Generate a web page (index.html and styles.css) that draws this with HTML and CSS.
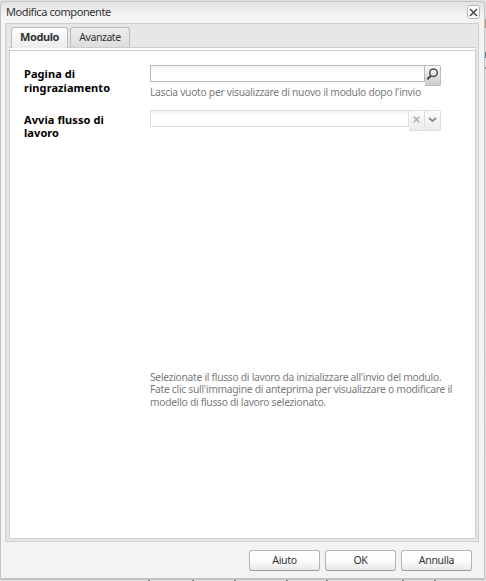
FILE: index.html
```html
<!DOCTYPE html>
<html lang="it">
<head>
<meta charset="utf-8">
<title>Modifica componente</title>
<link rel="stylesheet" href="styles.css">
</head>
<body>
<div class="dialog">
  <header class="titlebar">
    <span class="title">Modifica componente</span>
    <button class="close" aria-label="Chiudi"><svg width="13" height="13" viewBox="0 0 13 13"><path d="M3 3l7 7M10 3l-7 7"/></svg></button>
  </header>
  <main class="body">
    <nav class="tabs">
      <span class="tab active">Modulo</span>
      <span class="tab">Avanzate</span>
    </nav>
    <section class="panel">
      <div class="row first">
        <div class="label"><div>Pagina di</div><div>ringraziamento</div></div>
        <div class="field">
          <div class="control">
            <span class="input"></span>
            <span class="trigger search"><svg width="16" height="19" viewBox="0 0 16 19"><circle cx="8.500" cy="6.700" r="3.800"/><path class="handle" d="M5.800 9.700L2.300 13.200"/></svg></span>
          </div>
          <p class="hint help">Lascia vuoto per visualizzare di nuovo il modulo dopo l'invio</p>
        </div>
      </div>
      <div class="row second">
        <div class="label"><div>Avvia flusso di</div><div>lavoro</div></div>
        <div class="field">
          <div class="control disabled">
            <span class="input"></span>
            <span class="trigger clear"><svg width="16" height="19" viewBox="0 0 16 19"><path d="M4.500 5.500l6 6M10.500 5.500l-6 6"/></svg></span>
            <span class="trigger"><svg width="16" height="19" viewBox="0 0 16 19"><path d="M4 7l3.500 3.200L11 7"/></svg></span>
          </div>
        </div>
      </div>
      <div class="hint workflow">
        <div>Selezionate il flusso di lavoro da inizializzare all'invio del modulo.</div>
        <div>Fate clic sull'immagine di anteprima per visualizzare o modificare il</div>
        <div>modello di flusso di lavoro selezionato.</div>
      </div>
    </section>
  </main>
  <footer class="actions">
    <button class="btn">Aiuto</button>
    <button class="btn">OK</button>
    <button class="btn">Annulla</button>
  </footer>
</div>
</body>
</html>
```
FILE: styles.css
```css
* { box-sizing: border-box; }
body {
  margin: 0;
  height: 581px;
  overflow: hidden;
  background:
    linear-gradient(#b99a92, #b99a92) 485px 19px / 1px 9px no-repeat,
    linear-gradient(#607890, #607890) 485px 52px / 1px 6px no-repeat,
    linear-gradient(#888, #888) 485px 67px / 1px 2px no-repeat,
    linear-gradient(#777, #777) 148px 580px / 2px 1px no-repeat,
    linear-gradient(#777, #777) 192px 580px / 2px 1px no-repeat,
    linear-gradient(#777, #777) 234px 580px / 2px 1px no-repeat,
    linear-gradient(#777, #777) 286px 580px / 2px 1px no-repeat,
    linear-gradient(#777, #777) 326px 580px / 2px 1px no-repeat,
    linear-gradient(#777, #777) 402px 580px / 2px 1px no-repeat,
    linear-gradient(#777, #777) 434px 580px / 2px 1px no-repeat,
    #e0e0e0;
  font: 11px/13px "Noto Sans", "Open Sans", sans-serif;
  color: #333;
}
.dialog {
  display: flex;
  flex-direction: column;
  width: 485px;
  height: 579px;
  margin-top: 1px;
  border: 1px solid #c3c3c3;
  border-bottom-width: 2px;
  border-radius: 5px 5px 2px 2px;
  background: linear-gradient(#e2e2e2, #f4f4f4 14px, #f3f3f3);
}
.titlebar {
  display: flex;
  justify-content: space-between;
  height: 21px;
  padding: 3px 4px 0 5px;
}
.title { line-height: 14px; letter-spacing: -.42px; }
button { font: inherit; color: inherit; padding: 0; }
.close {
  width: 13px;
  height: 14px;
  border: 1px solid #b4b4b4;
  border-radius: 3px;
  background: #fff;
  display: flex;
  align-items: center;
  justify-content: center;
}
svg { fill: none; stroke: #505050; stroke-width: 1.7; display: block; flex: none; }
.body {
  display: flex;
  flex-direction: column;
  height: 519px;
  margin: 0 5px 0 4px;
  border: 1px solid #cfcfcf;
  border-left: 2px solid #d8d8d8;
  background: #e7e7e7;
  padding: 0 2px 2px;
}
.tabs { display: flex; align-items: flex-end; gap: 2px; height: 23px; padding-left: 2px; }
.tab {
  width: 60px;
  height: 20px;
  border: 1px solid #bbb;
  border-bottom: 0;
  border-radius: 3px 3px 0 0;
  background: linear-gradient(#ececec, #dedede);
  text-align: center;
  line-height: 18px;
  font-size: 10.500px;
  letter-spacing: -.45px;
}
.tab.active {
  position: relative;
  width: 57px;
  height: 21px;
  margin-bottom: -1px;
  background: linear-gradient(#fff, #ececec);
  font-weight: bold;
  font-size: 11px;
  line-height: 18px;
  letter-spacing: -.4px;
}
.panel {
  flex: 1;
  border: 1px solid #ccc;
  border-top: 4px double #ccc;
  background: #fff;
  padding: 14px 0 0 14px;
}
.row { display: flex; }
.first { height: 45px; }
.label {
  width: 126px;
  padding-top: 2px;
  line-height: 14px;
  font-weight: bold;
  letter-spacing: .08px;
  color: #000;
}
.second .label { padding-top: 3px; line-height: 13px; }
.control { display: flex; width: 291px; height: 21px; }
.input {
  flex: 1;
  height: 17px;
  border: 1px solid #b9b9b9;
  background: linear-gradient(#f1f4f5, #fff 5px);
}
.trigger {
  width: 16px;
  height: 21px;
  border: 1px solid #bcbcbc;
  border-left: 0;
  border-radius: 0 2px 2px 0;
  background: linear-gradient(#fafafa, #ccc);
  overflow: hidden;
}
.search svg { stroke-width: 1.5; }
.search .handle { stroke-width: 2.3; }
.disabled .input { border-color: #ddd; }
.disabled .trigger { border-color: #ddd; background: linear-gradient(#fcfcfc, #ebebeb); }
.disabled svg { stroke: #888; }
.disabled .clear { border-radius: 0; }
.disabled .clear svg { stroke: #aaa; stroke-width: 1.4; }
.hint { font-size: 10.300px; line-height: 12.400px; letter-spacing: -.29px; color: #7c7c7c; white-space: nowrap; }
.help { margin: 0; }
.workflow { margin: 232px 0 0 126px; }
.actions { display: flex; justify-content: flex-end; gap: 5px; padding: 8px 12px 0 0; }
.btn {
  width: 71px;
  height: 21px;
  border: 1px solid #b4b4b4;
  border-bottom-color: #999;
  border-radius: 3px;
  background: linear-gradient(#fff 40%, #e9e9e9);
  font-size: 10.500px;
  letter-spacing: -.3px;
}
```
